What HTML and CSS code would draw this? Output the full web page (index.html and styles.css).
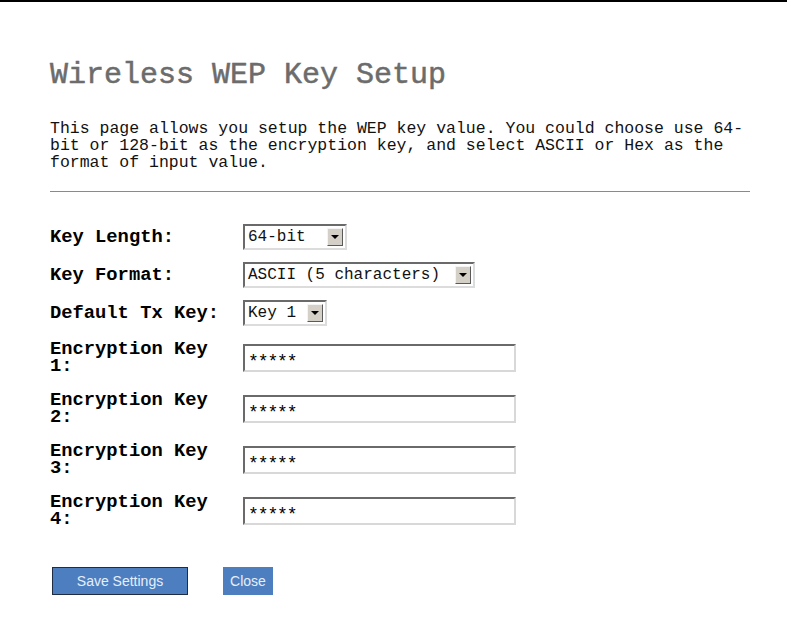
FILE: index.html
```html
<!DOCTYPE html>
<html>
<head>
<meta charset="utf-8">
<title>Wireless WEP Key Setup</title>
<link rel="stylesheet" href="styles.css">
</head>
<body>
<div class="topbar"></div>
<div class="page">
  <h1 class="title">Wireless WEP Key Setup</h1>
  <p class="intro">This page allows you setup the WEP key value. You could choose use 64-bit or 128-bit as the encryption key, and select ASCII or Hex as the format of input value.</p>
  <hr class="rule">
  <div class="form">
    <div class="row row-sel">
      <div class="label">Key Length:</div>
      <div class="select w-len"><span class="sel-text">64-bit</span><span class="arrow"></span></div>
    </div>
    <div class="row row-sel">
      <div class="label">Key Format:</div>
      <div class="select w-fmt"><span class="sel-text">ASCII (5 characters)</span><span class="arrow"></span></div>
    </div>
    <div class="row row-sel">
      <div class="label">Default Tx Key:</div>
      <div class="select w-key"><span class="sel-text">Key 1</span><span class="arrow"></span></div>
    </div>
    <div class="row row-key">
      <div class="label">Encryption Key 1:</div>
      <div class="field">*****</div>
    </div>
    <div class="row row-key">
      <div class="label">Encryption Key 2:</div>
      <div class="field">*****</div>
    </div>
    <div class="row row-key">
      <div class="label">Encryption Key 3:</div>
      <div class="field">*****</div>
    </div>
    <div class="row row-key">
      <div class="label">Encryption Key 4:</div>
      <div class="field">*****</div>
    </div>
  </div>
  <div class="buttons">
    <button class="btn btn-save">Save Settings</button>
    <button class="btn btn-close">Close</button>
  </div>
</div>
</body>
</html>
```
FILE: styles.css
```css
html, body {
  margin: 0;
  padding: 0;
  background: #ffffff;
}
.topbar {
  height: 2px;
  background: #000;
}
.page {
  padding-left: 50px;
  width: 700px;
}
.title {
  margin: 55px 0 0 0;
  font-family: "Liberation Mono", "DejaVu Sans Mono", monospace;
  font-size: 30px;
  line-height: 36px;
  font-weight: normal;
  color: #6c6c6c;
  -webkit-text-stroke: 0.5px #6c6c6c;
}
.intro {
  margin: 27px 0 0 0;
  font-family: "Liberation Mono", "DejaVu Sans Mono", monospace;
  font-size: 16.5px;
  line-height: 17px;
  color: #111;
}
.rule {
  margin: 20px 0 0 0;
  border: 0;
  height: 1px;
  background: #8a8a8a;
}
.form {
  margin-top: 26px;
}
.row {
  display: flex;
  align-items: center;
}
.row-sel { height: 38px; }
.row-key { height: 51px; }
.label {
  width: 185px;
  margin-right: 8px;
  font-family: "Liberation Mono", "DejaVu Sans Mono", monospace;
  font-weight: bold;
  font-size: 18.8px;
  line-height: 17px;
  color: #000;
}
.select {
  box-sizing: border-box;
  height: 26px;
  display: flex;
  align-items: center;
  justify-content: space-between;
  border: 2px solid;
  border-color: #6a6a6a #dcdcdc #dcdcdc #6a6a6a;
  background: #fff;
  padding: 0 2px 0 3px;
}
.w-len { width: 104px; }
.w-fmt { width: 232px; }
.w-key { width: 84px; }
.sel-text {
  font-family: "Liberation Mono", "DejaVu Sans Mono", monospace;
  font-size: 16px;
  color: #111;
  white-space: nowrap;
}
.arrow {
  box-sizing: border-box;
  width: 16px;
  height: 18px;
  background: #d4d0c8;
  border: 1px solid;
  border-color: #f4f4f4 #5a5a5a #5a5a5a #f4f4f4;
  position: relative;
}
.arrow::after {
  content: "";
  position: absolute;
  left: 3px;
  top: 6px;
  border-left: 4px solid transparent;
  border-right: 4px solid transparent;
  border-top: 4px solid #000;
}
.field {
  box-sizing: border-box;
  width: 273px;
  height: 28px;
  border: 2px solid;
  border-color: #6a6a6a #d8d8d8 #d8d8d8 #6a6a6a;
  padding: 7px 3px 0 3px;
  font-family: "Liberation Mono", "DejaVu Sans Mono", monospace;
  font-size: 18px;
  line-height: 18px;
  letter-spacing: -1.1px;
  color: #000;
}
.buttons {
  display: flex;
  align-items: center;
  margin-top: 31px;
  padding-left: 2px;
}
.btn {
  box-sizing: border-box;
  height: 28px;
  background: #4d7ec0;
  color: #e6eef8;
  font-family: "Liberation Sans", Arial, sans-serif;
  font-size: 14px;
  padding: 0;
  cursor: pointer;
}
.btn-save {
  width: 136px;
  border: 1px solid #1e2c44;
}
.btn-close {
  width: 50px;
  margin-left: 35px;
  border: 0;
}
```
